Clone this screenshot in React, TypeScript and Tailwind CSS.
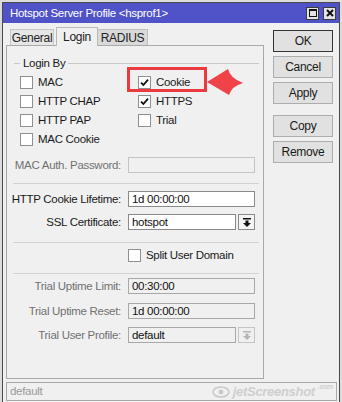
import React from 'react';

const ui = "font-['Liberation_Sans',Arial,sans-serif] text-[11.5px] tracking-[-0.3px]";

function Check({ checked = false }: { checked?: boolean }) {
  return (
    <span className="flex h-[13px] w-[13px] shrink-0 items-center justify-center border border-[#8f8f8f] bg-white">
      {checked && (
        <svg width="9" height="9" viewBox="0 0 9 9">
          <path d="M1 4.6 L3.4 7 L8 1.6" fill="none" stroke="#111" strokeWidth="1.8" />
        </svg>
      )}
    </span>
  );
}

function Option({ label, checked = false }: { label: string; checked?: boolean }) {
  return (
    <div className="flex h-[13px] items-center gap-[5px] whitespace-nowrap leading-[13px] text-[#1a1a1a]">
      <Check checked={checked} />
      <span>{label}</span>
    </div>
  );
}

function DropArrow({ dim = false }: { dim?: boolean }) {
  return (
    <svg width="8" height="9" viewBox="0 0 8 9">
      <rect x="0" y="0" width="8" height="1.5" fill={dim ? '#b5b5b5' : '#111'} />
      <polygon points="4,9 0,5 2.5,5 2.5,2.5 5.5,2.5 5.5,5 8,5" fill={dim ? '#b5b5b5' : '#111'} />
    </svg>
  );
}

interface FieldProps {
  label: string;
  value?: string;
  dim?: boolean;
  disabled?: boolean;
  dropdown?: boolean;
  className?: string;
}

function Field({ label, value = '', dim = false, disabled = false, dropdown = false, className = '' }: FieldProps) {
  const box = disabled
    ? 'border-[#c4c4c4] bg-[#f0f0f0]'
    : dim
      ? 'border-[#a8a8a8] bg-[#f0f0f0]'
      : 'border-[#8a8a8a] bg-white';
  return (
    <div className={`flex h-[16px] items-center ${className}`}>
      <span
        className={`w-[121px] whitespace-nowrap pr-[7px] text-right leading-[16px] ${
          dim || disabled ? 'text-[#707070]' : 'text-[#1a1a1a]'
        }`}
      >
        {label}
      </span>
      <div className={`h-[16px] border px-[3px] leading-[14px] text-[#111] ${box} ${dropdown ? 'w-[108px]' : 'w-[127px]'}`}>
        {value}
      </div>
      {dropdown && (
        <div
          className={`ml-[2px] flex h-[16px] w-[17px] items-center justify-center border ${
            dim ? 'border-[#c4c4c4]' : 'border-[#8a8a8a] bg-[#f4f4f4]'
          }`}
        >
          <DropArrow dim={dim} />
        </div>
      )}
    </div>
  );
}

function Separator({ className = '' }: { className?: string }) {
  return <div className={`ml-[6px] mr-[4px] h-px bg-[#d2d2d2] ${className}`} />;
}

function Btn({ label, primary = false, className = '' }: { label: string; primary?: boolean; className?: string }) {
  return (
    <div
      className={`flex h-[22px] w-[60px] items-center justify-center bg-[#e1e1e1] text-[12px] text-[#1a1a1a] ${
        primary ? 'border border-[#333]' : 'border border-[#adadad]'
      } ${className}`}
    >
      {label}
    </div>
  );
}

export default function App() {
  return (
    <div className={`relative h-[402px] w-[342px] overflow-hidden bg-[#dcdcdc] pl-[2px] pt-[2px] ${ui}`}>
      <div className="flex h-[401px] w-[338px] flex-col border border-[#4a4a4a] bg-[#f0f0f0]">
        {/* title bar */}
        <div className="flex h-[20px] shrink-0 items-center bg-[#5053c8] pl-[7px] pr-[3px] text-white">
          <span className="flex-1 whitespace-nowrap leading-[20px]">Hotspot Server Profile &lt;hsprof1&gt;</span>
          <div className="flex gap-[4px]">
            <div className="flex h-[13px] w-[13px] items-center justify-center border border-[#3c3c3c] bg-[#e4e4e4]">
              <div className="h-[8px] w-[8px] border border-t-2 border-[#111]" />
            </div>
            <div className="flex h-[13px] w-[13px] items-center justify-center border border-[#3c3c3c] bg-[#e4e4e4]">
              <svg width="8" height="8" viewBox="0 0 8 8">
                <path d="M1 1 L7 7 M7 1 L1 7" stroke="#111" strokeWidth="2" />
              </svg>
            </div>
          </div>
        </div>

        {/* body */}
        <div className="flex flex-1 pl-[3px] pt-[4px]">
          <div className="flex w-[258px] flex-col">
            <div className="relative z-10 flex h-[18px] items-end pl-[4px] text-[12px] text-[#222]">
              <div className="flex h-[16px] w-[44px] items-center justify-center border border-b-0 border-[#c6c6c6] bg-[#e6e6e6]">
                General
              </div>
              <div className="-mb-px ml-[2px] flex h-[19px] w-[42px] items-center justify-center border border-b-0 border-[#b9b9b9] bg-[#f0f0f0]">
                Login
              </div>
              <div className="flex h-[16px] w-[50px] items-center justify-center border border-b-0 border-l-0 border-[#c0c0c0] bg-[#d9d9d9]">
                RADIUS
              </div>
            </div>

            <div className="flex h-[334px] flex-col border border-[#a9a9a9]">
              {/* Login By */}
              <div className="mt-[10px] flex h-[14px] items-center">
                <div className="ml-[7px] h-px w-[6px] bg-[#c8c8c8]" />
                <span className="px-[3px] leading-[14px] text-[#1a1a1a]">Login By</span>
                <div className="mr-[4px] h-px flex-1 bg-[#c8c8c8]" />
              </div>

              <div className="mt-[6px] grid grid-cols-[118px_1fr] gap-y-[6px] pl-[13px]">
                <Option label="MAC" />
                <Option label="Cookie" checked />
                <Option label="HTTP CHAP" />
                <Option label="HTTPS" checked />
                <Option label="HTTP PAP" />
                <Option label="Trial" />
                <Option label="MAC Cookie" />
              </div>

              <Field label="MAC Auth. Password:" disabled className="mt-[11px]" />
              <Separator className="mt-[10px]" />
              <Field label="HTTP Cookie Lifetime:" value="1d 00:00:00" className="mt-[7px]" />
              <Field label="SSL Certificate:" value="hotspot" dropdown className="mt-[7px]" />
              <Separator className="mt-[12px]" />
              <div className="ml-[121px] mt-[6px]">
                <Option label="Split User Domain" />
              </div>
              <Separator className="mt-[11px]" />
              <Field label="Trial Uptime Limit:" value="00:30:00" dim className="mt-[4px]" />
              <Field label="Trial Uptime Reset:" value="1d 00:00:00" dim className="mt-[9px]" />
              <Field label="Trial User Profile:" value="default" dim dropdown className="mt-[8px]" />
            </div>
          </div>

          <div className="ml-[9px] mt-[3px] flex flex-col gap-[4px]">
            <Btn label="OK" primary />
            <Btn label="Cancel" />
            <Btn label="Apply" />
            <Btn label="Copy" className="mt-[7px]" />
            <Btn label="Remove" />
          </div>
        </div>

        {/* status bar */}
        <div className="mb-[1px] ml-[3px] flex h-[19px] w-[331px] shrink-0 items-center border border-[#a9a9a9] pl-[3px] pr-[3px]">
          <span className="flex-1 text-[#9a9a9a]">default</span>
          <div className="flex items-center gap-[3px] italic text-[#cfcfcf]">
            <svg width="18" height="12" viewBox="0 0 18 12">
              <ellipse cx="9" cy="6" rx="8" ry="5" fill="none" stroke="#c8c8c8" strokeWidth="1.6" />
              <circle cx="9" cy="6" r="2.4" fill="#c8c8c8" />
            </svg>
            <span className="text-[13px] font-bold tracking-[-0.3px]">jetScreenshot</span>
            <span className="-mt-[8px] text-[7px] font-bold">.com</span>
          </div>
        </div>
      </div>

      {/* annotation overlay */}
      <div className="absolute left-[127px] top-[67px] h-[25px] w-[80px] border-[3px] border-[#ec3b40]" />
      <svg className="absolute left-[206px] top-[66px]" width="40" height="32" viewBox="0 0 40 32">
        <path d="M1 16 L22 3 Q24 12 37 17 Q26 20 23 29 Z" fill="#ef4349" />
      </svg>
    </div>
  );
}
